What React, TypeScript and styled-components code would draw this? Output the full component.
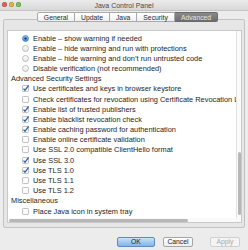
import React from 'react'
import styled, { createGlobalStyle } from 'styled-components'

const GlobalStyle = createGlobalStyle`
  html, body {
    margin: 0;
    padding: 0;
    background: #ececec;
  }
`

type Item =
  | { kind: 'header'; label: string }
  | { kind: 'radio'; label: string; on: boolean }
  | { kind: 'check'; label: string; on: boolean }

const items: Item[] = [
  { kind: 'radio', label: 'Enable – show warning if needed', on: true },
  { kind: 'radio', label: 'Enable – hide warning and run with protections', on: false },
  { kind: 'radio', label: 'Enable – hide warning and don’t run untrusted code', on: false },
  { kind: 'radio', label: 'Disable verification (not recommended)', on: false },
  { kind: 'header', label: 'Advanced Security Settings' },
  { kind: 'check', label: 'Use certificates and keys in browser keystore', on: true },
  { kind: 'check', label: 'Check certificates for revocation using Certificate Revocation Lists (CRLs)', on: false },
  { kind: 'check', label: 'Enable list of trusted publishers', on: true },
  { kind: 'check', label: 'Enable blacklist revocation check', on: true },
  { kind: 'check', label: 'Enable caching password for authentication', on: true },
  { kind: 'check', label: 'Enable online certificate validation', on: false },
  { kind: 'check', label: 'Use SSL 2.0 compatible ClientHello format', on: false },
  { kind: 'check', label: 'Use SSL 3.0', on: true },
  { kind: 'check', label: 'Use TLS 1.0', on: true },
  { kind: 'check', label: 'Use TLS 1.1', on: false },
  { kind: 'check', label: 'Use TLS 1.2', on: false },
  { kind: 'header', label: 'Miscellaneous' },
  { kind: 'check', label: 'Place Java icon in system tray', on: false },
]

const tabs = ['General', 'Update', 'Java', 'Security', 'Advanced']

const Radio = ({ on }: { on: boolean }) => (
  <svg width="7" height="7" viewBox="0 0 7 7">
    <defs>
      <linearGradient id={on ? 'rOn' : 'rOff'} x1="0" y1="0" x2="0" y2="1">
        <stop offset="0" stopColor={on ? '#8fc0f0' : '#ffffff'} />
        <stop offset="1" stopColor={on ? '#3d8ae0' : '#e6e6e6'} />
      </linearGradient>
    </defs>
    <circle cx="3.5" cy="3.5" r="3" fill={`url(#${on ? 'rOn' : 'rOff'})`} stroke={on ? '#4a7cc0' : '#a8a8a8'} strokeWidth="0.7" />
    {on && <circle cx="3.5" cy="3.5" r="1.1" fill="#1d2a3c" />}
  </svg>
)

const Check = ({ on }: { on: boolean }) => (
  <svg width="7" height="7" viewBox="0 0 7 7">
    <rect x="0.5" y="0.5" width="6" height="6" rx="0.8" fill="#fbfbfb" stroke="#a8a8a8" strokeWidth="0.7" />
    {on && <path d="M1.5 3.6 L3 5.3 L6.6 0.4" fill="none" stroke="#2f5fa8" strokeWidth="1.3" />}
  </svg>
)

const App = () => {
  return (
    <>
      <GlobalStyle />
      <Window>
        <TitleBar>
          <Lights>
            <Light color="#e0615a" />
            <Light color="#e2b540" />
            <Light color="#73c25a" />
          </Lights>
          <Title>Java Control Panel</Title>
        </TitleBar>

        <TabBar>
          {tabs.map((t) => (
            <Tab key={t} selected={t === 'Advanced'}>{t}</Tab>
          ))}
        </TabBar>

        <Panel>
          <ScrollPane>
            <List>
              {items.map((it, i) =>
                it.kind === 'header' ? (
                  <Header key={i}>{it.label}</Header>
                ) : (
                  <Row key={i}>
                    {it.kind === 'radio' ? <Radio on={it.on} /> : <Check on={it.on} />}
                    <span>{it.label}</span>
                  </Row>
                )
              )}
            </List>
            <VTrack>
              <VThumb />
            </VTrack>
            <HTrack>
              <HThumb />
            </HTrack>
            <Corner />
          </ScrollPane>
        </Panel>

        <Buttons>
          <Button primary>OK</Button>
          <Button>Cancel</Button>
          <Button disabled apart>Apply</Button>
        </Buttons>
      </Window>
    </>
  )
}
export default App

const Window = styled.div`
  width: 248px;
  height: 250px;
  display: flex;
  flex-direction: column;
  background: #ececec;
  font-family: "Liberation Sans", Arial, sans-serif;
  overflow: hidden;
`

const TitleBar = styled.div`
  height: 11px;
  position: relative;
  display: flex;
  align-items: center;
  justify-content: center;
  background: linear-gradient(to bottom, #ebebeb, #d8d8d8);
  border-bottom: 1px solid #c4c4c4;
  box-sizing: border-box;
`

const Lights = styled.div`
  position: absolute;
  left: 2px;
  top: 2px;
  display: flex;
  gap: 2px;
`

const Light = styled.div<{ color: string }>`
  width: 5px;
  height: 5px;
  border-radius: 50%;
  background: ${(p) => p.color};
  box-shadow: inset 0 0 0 0.5px rgba(0, 0, 0, 0.25);
`

const Title = styled.div`
  font-size: 7px;
  color: #4a4a4a;
  line-height: 11px;
`

const TabBar = styled.div`
  display: flex;
  justify-content: center;
  margin: 1px 0 -3px 7px;
  position: relative;
  z-index: 1;
`

const Tab = styled.div<{ selected?: boolean }>`
  height: 10px;
  line-height: 10px;
  padding: 0 6px;
  font-size: 6.8px;
  box-sizing: border-box;
  color: ${(p) => (p.selected ? '#e8e8e8' : '#2a2a2a')};
  background: ${(p) =>
    p.selected
      ? 'linear-gradient(to bottom, #8a8a8a, #6d6d6d)'
      : 'linear-gradient(to bottom, #ffffff, #f0f0f0)'};
  border: 1px solid #a9a9a9;
  border-left: none;

  &:first-child {
    border-left: 1px solid #a9a9a9;
    border-radius: 2px 0 0 2px;
  }

  &:last-child {
    border-radius: 0 2px 2px 0;
    border-color: #6a6a6a;
  }
`

const Panel = styled.div`
  margin: 0 3px 0 3px;
  height: 209px;
  box-sizing: border-box;
  border: 1px solid #c2c2c2;
  border-radius: 2px;
  background: #e6e6e6;
  padding: 10px 2px 4px 3px;
  display: flex;
`

const ScrollPane = styled.div`
  flex: 1;
  display: grid;
  grid-template-columns: 1fr 5px;
  grid-template-rows: 1fr 4px;
  background: #ffffff;
  border: 1px solid #c9c9c9;
  overflow: hidden;
`

const List = styled.div`
  padding: 2px 0 0 3px;
  overflow: hidden;
  white-space: nowrap;
  font-size: 7.4px;
  color: #1e1e1e;
`

const Header = styled.div`
  height: 10.18px;
  line-height: 10.18px;
`

const Row = styled.div`
  height: 10.18px;
  display: flex;
  align-items: center;
  gap: 4px;
  padding-left: 11px;

  svg {
    flex: none;
  }
`

const VTrack = styled.div`
  border-left: 1px solid #e2e2e2;
  background: #fafafa;
  padding-top: 121px;
  display: flex;
  justify-content: center;
`

const VThumb = styled.div`
  width: 3px;
  height: 63px;
  border-radius: 2px;
  background: #b7b7b7;
`

const HTrack = styled.div`
  display: flex;
  align-items: center;
  padding-left: 1px;
  background: #fafafa;
`

const HThumb = styled.div`
  width: 179px;
  height: 3px;
  border-radius: 2px;
  background: #b7b7b7;
`

const Corner = styled.div`
  background: #fafafa;
`

const Buttons = styled.div`
  display: flex;
  justify-content: flex-end;
  gap: 8px;
  padding: 9px 8px 0 0;
`

const Button = styled.div<{ primary?: boolean; disabled?: boolean; apart?: boolean }>`
  height: 10px;
  width: ${(p) => (p.primary ? '38px' : '30px')};
  margin-left: ${(p) => (p.apart ? '9px' : '0')};
  box-sizing: border-box;
  border-radius: 2px;
  font-size: 6.8px;
  line-height: 8px;
  text-align: center;
  color: ${(p) => (p.disabled ? '#a9a9a9' : '#222222')};
  border: 1px solid ${(p) => (p.primary ? '#5f8ac4' : p.disabled ? '#cfcfcf' : '#a6a6a6')};
  background: ${(p) =>
    p.primary
      ? 'linear-gradient(to bottom, #c8e0f8, #7fb4ea)'
      : p.disabled
        ? '#f4f4f4'
        : 'linear-gradient(to bottom, #ffffff, #eeeeee)'};
`
